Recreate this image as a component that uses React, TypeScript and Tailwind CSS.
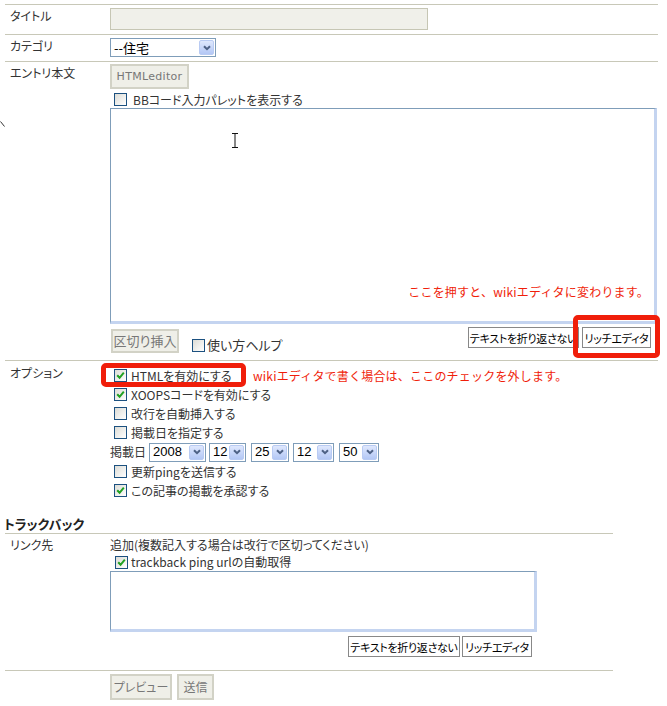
import React from 'react';

const Check = ({ checked = false }: { checked?: boolean }) => (
  <span className="flex h-[13px] w-[13px] shrink-0 items-center justify-center border border-[#1c5180] bg-gradient-to-br from-[#dcdcd6] to-white">
    {checked && (
      <svg viewBox="0 0 9 9" className="h-[9px] w-[9px]">
        <path d="M1.2 4.2 L3.6 6.8 L7.8 1.6" stroke="#21a121" strokeWidth="2" fill="none" />
      </svg>
    )}
  </span>
);

const Arrow = () => (
  <span className="flex h-[15px] w-[15px] shrink-0 items-center justify-center rounded-[2px] border border-[#b9cbf3] bg-gradient-to-b from-[#dfe8fd] to-[#b3c7f5]">
    <svg viewBox="0 0 8 6" className="h-[6px] w-[8px]">
      <path d="M1 1.2 L4 4.2 L7 1.2" stroke="#4d6185" strokeWidth="2" fill="none" />
    </svg>
  </span>
);

const Select = ({ value, className = '' }: { value: string; className?: string }) => (
  <span className={`flex h-[19px] items-center justify-between border border-[#7f9db9] bg-white pl-[3px] pr-[1px] font-['Liberation_Sans',sans-serif] text-[13px] text-black ${className}`}>
    <span>{value}</span>
    <Arrow />
  </span>
);

const GrayButton = ({ children, className = '' }: { children: React.ReactNode; className?: string }) => (
  <span className={`flex items-center justify-center whitespace-nowrap border-2 border-[#d2d2c6] bg-[#efefe8] text-[#777] ${className}`}>
    {children}
  </span>
);

const WhiteButton = ({ children, className = '' }: { children: React.ReactNode; className?: string }) => (
  <span className={`flex h-[21px] items-center justify-center overflow-hidden whitespace-nowrap border border-[#888] bg-white text-[11px] tracking-[-0.3px] text-black ${className}`}>
    {children}
  </span>
);

const CheckRow = ({ checked, children }: { checked?: boolean; children: React.ReactNode }) => (
  <div className="flex h-[19px] items-center gap-[4px] pl-[4px]">
    <Check checked={checked} />
    {children}
  </div>
);

const RedNote = ({ children, className = '' }: { children: React.ReactNode; className?: string }) => (
  <span className={`whitespace-nowrap text-[12px] tracking-[0.2px] text-[#f01e0a] [font-feature-settings:normal] ${className}`}>{children}</span>
);

export default function App() {
  return (
    <div className="relative h-[706px] w-[667px] overflow-hidden bg-white pl-[5px] pt-[4px] font-['Noto_Sans_CJK_JP',sans-serif] text-[12px] leading-[16px] text-[#333] [font-feature-settings:'palt']">
      {/* stray cursor mark */}
      <svg className="absolute left-0 top-[121px] h-[6px] w-[5px]" viewBox="0 0 5 6">
        <path d="M0.5 0.5 L4.5 5.5" stroke="#333" strokeWidth="1" />
      </svg>

      <div className="w-[653px]">
        <div className="flex border-t border-[#c8c8b8]">
          <div className="w-[105px] shrink-0 pl-[5px] pt-[3px]">タイトル</div>
          <div className="pb-[4px] pt-[3px]">
            <div className="h-[22px] w-[318px] border border-[#c6c6b4] bg-[#f0f0ea]" />
          </div>
        </div>

        <div className="flex border-t border-[#c8c8b8]">
          <div className="w-[105px] shrink-0 pl-[5px] pt-[3px]">カテゴリ</div>
          <div className="pb-[4px] pt-[3px]">
            <span className="flex h-[19px] w-[106px] items-center justify-between border border-[#7f9db9] bg-white pl-[3px] pr-[1px] text-[13px] text-black [font-feature-settings:normal]">
              <span>--住宅</span>
              <Arrow />
            </span>
          </div>
        </div>

        <div className="flex border-t border-[#c8c8b8]">
          <div className="w-[105px] shrink-0 pl-[5px] pt-[3px]">エントリ本文</div>
          <div className="pb-[7px] pt-[2px]">
            <GrayButton className="h-[25px] w-[79px] font-['DejaVu_Sans',sans-serif] text-[11px] tracking-[0.3px]">HTMLeditor</GrayButton>
            <div className="flex h-[19px] items-center gap-[6px] pl-[4px] pt-[2px]">
              <Check />
              <span>BBコード入力パレットを表示する</span>
            </div>
            <div className="relative flex h-[216px] w-[547px] flex-col items-end justify-end border-b-[3px] border-l border-r-[3px] border-t border-b-[#c4d4f0] border-l-[#7f9db9] border-r-[#c4d4f0] border-t-[#7f9db9] bg-white pb-[21px] pr-[5px]">
              <svg className="absolute left-[120px] top-[24px] h-[15px] w-[8px]" viewBox="0 0 8 15">
                <path d="M1 0.5 H7 M4 0.5 V14.5 M1 14.5 H7" stroke="#111" strokeWidth="1" fill="none" />
              </svg>
              <RedNote>ここを押すと、wikiエディタに変わります。</RedNote>
            </div>
            <div className="flex w-[547px] items-start justify-between">
              <div className="flex items-end">
                <GrayButton className="ml-[1px] mt-[5px] h-[24px] w-[68px] text-[13px]">区切り挿入</GrayButton>
                <span className="mb-[1px] ml-[13px]">
                  <Check />
                </span>
                <span className="ml-[2px] text-[13px]">使い方ヘルプ</span>
              </div>
              <div className="mr-[6px] mt-[3px] flex gap-[3px]">
                <WhiteButton className="w-[111px]">テキストを折り返さない</WhiteButton>
                <div className="relative">
                  <WhiteButton className="w-[69px]">リッチエディタ</WhiteButton>
                  <span className="absolute bottom-[-10px] left-[-9px] right-[-9px] top-[-12px] rounded-[5px] border-[5px] border-[#f01e0a]" />
                </div>
              </div>
            </div>
          </div>
        </div>

        <div className="flex border-t border-[#c8c8b8]">
          <div className="w-[105px] shrink-0 pl-[5px] pt-[4px]">オプション</div>
          <div className="pt-[5px]">
            <div className="relative flex h-[19px] items-center gap-[4px] pl-[4px]">
              <span className="absolute left-[-9px] top-[-3px] h-[24px] w-[145px] rounded-[5px] border-[5px] border-[#f01e0a]" />
              <Check checked />
              <span className="w-[118px] whitespace-nowrap">HTMLを有効にする</span>
              <RedNote>wikiエディタで書く場合は、ここのチェックを外します。</RedNote>
            </div>
            <CheckRow checked>XOOPSコードを有効にする</CheckRow>
            <CheckRow>改行を自動挿入する</CheckRow>
            <CheckRow>掲載日を指定する</CheckRow>
            <div className="flex h-[20px] items-center">
              <span className="mr-[3px]">掲載日</span>
              <Select value="2008" className="mr-[3px] w-[57px]" />
              <Select value="12" className="mr-[5px] w-[37px]" />
              <Select value="25" className="mr-[4px] w-[38px]" />
              <Select value="12" className="mr-[5px] w-[41px]" />
              <Select value="50" className="w-[40px]" />
            </div>
            <CheckRow>更新pingを送信する</CheckRow>
            <CheckRow checked>この記事の掲載を承認する</CheckRow>
          </div>
        </div>
      </div>

      <div className="-ml-[1px] mt-[16px] pb-[1px] text-[13px] font-bold text-[#222]">トラックバック</div>

      <div className="w-[608px]">
        <div className="flex border-t border-[#c8c8b8]">
          <div className="w-[105px] shrink-0 pl-[5px] pt-[3px]">リンク先</div>
          <div className="pb-[13px] pt-[3px]">
            <div>追加(複数記入する場合は改行で区切ってください)</div>
            <div className="flex h-[18px] items-center gap-[3px] pl-[5px]">
              <Check checked />
              <span>trackback ping urlの自動取得</span>
            </div>
            <div className="h-[61px] w-[427px] border-b-[3px] border-l border-r-[3px] border-t border-b-[#c4d4f0] border-l-[#7f9db9] border-r-[#c4d4f0] border-t-[#7f9db9] bg-white" />
            <div className="mr-[5px] mt-[4px] flex w-[422px] justify-end gap-[2px]">
              <WhiteButton className="w-[112px]">テキストを折り返さない</WhiteButton>
              <WhiteButton className="w-[70px]">リッチエディタ</WhiteButton>
            </div>
          </div>
        </div>

        <div className="flex border-t border-[#c8c8b8]">
          <div className="w-[105px] shrink-0" />
          <div className="flex gap-[5px] pt-[3px]">
            <GrayButton className="h-[26px] w-[62px] text-[12px]">プレビュー</GrayButton>
            <GrayButton className="h-[26px] w-[37px] text-[12px]">送信</GrayButton>
          </div>
        </div>
      </div>
    </div>
  );
}
